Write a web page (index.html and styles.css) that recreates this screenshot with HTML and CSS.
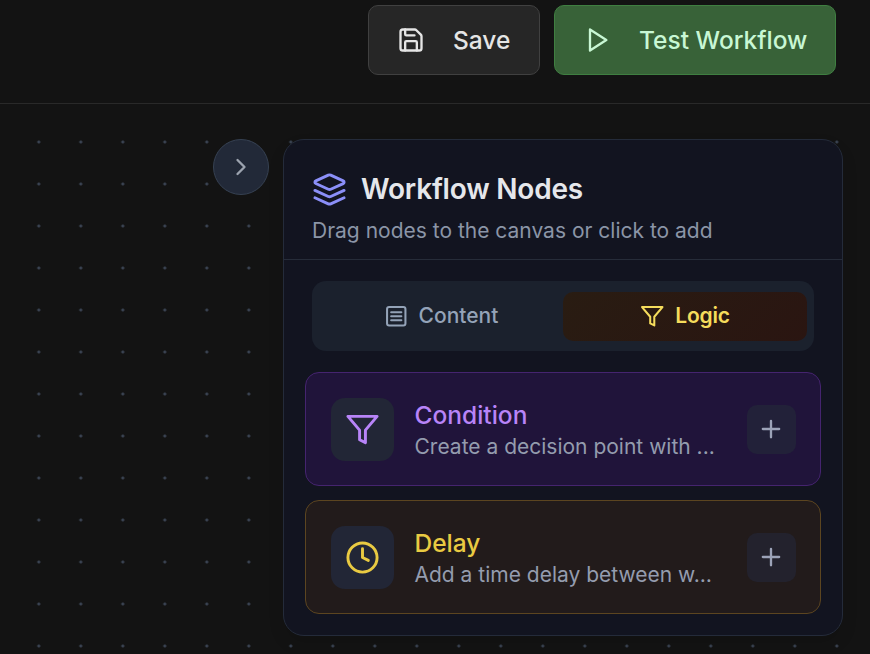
FILE: index.html
```html
<!DOCTYPE html>
<html lang="en">
<head>
    <meta charset="UTF-8">
    <meta name="viewport" content="width=device-width, initial-scale=1.0">
    <title>Workflow Builder</title>
    <link rel="stylesheet" href="styles.css">
</head>
<body>
    <header class="toolbar">
        <button class="btn btn-save">
            <svg class="icon" width="28" height="28" viewBox="0 0 24 24"><path d="M15.2 3a2 2 0 0 1 1.4.6l3.8 3.8a2 2 0 0 1 .6 1.4V19a2 2 0 0 1-2 2H5a2 2 0 0 1-2-2V5a2 2 0 0 1 2-2z"/><path d="M17 21v-7a1 1 0 0 0-1-1H8a1 1 0 0 0-1 1v7"/><path d="M7 3v4a1 1 0 0 0 1 1h7"/></svg>
            <span>Save</span>
        </button>
        <button class="btn btn-test">
            <svg class="icon" width="28" height="28" viewBox="0 0 24 24"><polygon points="6 3 20 12 6 21 6 3"/></svg>
            <span>Test Workflow</span>
        </button>
    </header>

    <main class="canvas">
        <button class="collapse-btn" aria-label="Collapse">
            <svg class="icon" width="28" height="28" viewBox="0 0 24 24"><path d="m9 18 6-6-6-6"/></svg>
        </button>

        <aside class="panel">
            <div class="panel-header">
                <div class="panel-title">
                    <svg class="icon" width="35" height="35" viewBox="0 0 24 24"><path d="m12.83 2.18a2 2 0 0 0-1.66 0L2.6 6.08a1 1 0 0 0 0 1.83l8.58 3.91a2 2 0 0 0 1.66 0l8.58-3.9a1 1 0 0 0 0-1.83Z"/><path d="m22 17.65-9.17 4.16a2 2 0 0 1-1.66 0L2 17.65"/><path d="m22 12.65-9.17 4.16a2 2 0 0 1-1.66 0L2 12.65"/></svg>
                    <h2>Workflow Nodes</h2>
                </div>
                <p>Drag nodes to the canvas or click to add</p>
            </div>

            <div class="tabs">
                <button class="tab">
                    <svg class="icon" width="24.5" height="24.5" viewBox="0 0 24 24"><rect x="3" y="3" width="18" height="18" rx="2"/><path d="M7 8h10M7 12h10M7 16h10"/></svg>
                    <span>Content</span>
                </button>
                <button class="tab active">
                    <svg class="icon" width="24.5" height="24.5" viewBox="0 0 24 24"><polygon points="22 3 2 3 10 12.46 10 19 14 21 14 12.46 22 3"/></svg>
                    <span>Logic</span>
                </button>
            </div>

            <div class="node-list">
                <div class="node node-condition">
                    <div class="node-icon">
                        <svg class="icon" width="35" height="35" viewBox="0 0 24 24"><polygon points="22 3 2 3 10 12.46 10 19 14 21 14 12.46 22 3"/></svg>
                    </div>
                    <div class="node-text">
                        <h3>Condition</h3>
                        <p>Create a decision point with ...</p>
                    </div>
                    <button class="add-btn" aria-label="Add">
                        <svg class="icon" width="28" height="28" viewBox="0 0 24 24"><path d="M5 12h14M12 5v14"/></svg>
                    </button>
                </div>
                <div class="node node-delay">
                    <div class="node-icon">
                        <svg class="icon" width="35" height="35" viewBox="0 0 24 24"><circle cx="12" cy="12" r="10"/><polyline points="12 6 12 12 16 14"/></svg>
                    </div>
                    <div class="node-text">
                        <h3>Delay</h3>
                        <p>Add a time delay between w…</p>
                    </div>
                    <button class="add-btn" aria-label="Add">
                        <svg class="icon" width="28" height="28" viewBox="0 0 24 24"><path d="M5 12h14M12 5v14"/></svg>
                    </button>
                </div>
            </div>
        </aside>
    </main>
</body>
</html>
```
FILE: styles.css
```css
* {
    box-sizing: border-box;
}
body {
    margin: 0;
    height: 654px;
    overflow: hidden;
    display: flex;
    flex-direction: column;
    background-color: #131313;
    font-family: Inter, sans-serif;
}
h2, h3, p {
    margin: 0;
}
button {
    font-family: inherit;
    border: none;
    padding: 0;
    cursor: pointer;
}
.icon {
    flex-shrink: 0;
    fill: none;
    stroke: currentColor;
    stroke-width: 2;
    stroke-linecap: round;
    stroke-linejoin: round;
}

/* Toolbar */
.toolbar {
    height: 104px;
    flex-shrink: 0;
    padding: 5px 34px 0 0;
    border-bottom: 1px solid #292929;
    display: flex;
    justify-content: flex-end;
    align-items: flex-start;
    gap: 14px;
}
.btn {
    height: 70px;
    display: flex;
    align-items: center;
    gap: 28px;
    padding: 0 0 0 28px;
    border: 1px solid;
    border-radius: 10px;
    font-size: 24.5px;
    font-weight: 500;
    white-space: nowrap;
}
.btn-save {
    width: 172px;
    background-color: #262626;
    border-color: #404040;
    color: #e5e5e5;
}
.btn-test {
    width: 282px;
    background-color: #386238;
    border-color: #3f7f41;
    color: #c8f7d4;
}

/* Canvas */
.canvas {
    flex: 1;
    display: flex;
    align-items: flex-start;
    justify-content: flex-end;
    gap: 14px;
    padding: 35px 27px 0 0;
    background-image: radial-gradient(circle at center, #3a4352 1px, transparent 2px);
    background-size: 42px 42px;
    background-position: 17.8px 17px;
}
.collapse-btn {
    width: 56px;
    height: 56px;
    display: flex;
    align-items: center;
    justify-content: center;
    border: 1px solid #364152;
    border-radius: 50%;
    background-color: #222938;
    color: #9ca3af;
}

/* Panel */
.panel {
    width: 560px;
    height: 497px;
    border: 1px solid #242b3a;
    border-radius: 21px;
    background-color: #121420;
    box-shadow: 0 8px 16px rgba(0, 0, 0, 0.1);
}
.panel-header {
    height: 120px;
    padding: 28px 28px 0;
    border-bottom: 1px solid #262c39;
}
.panel-title {
    display: flex;
    align-items: center;
    gap: 14px;
    height: 42px;
    color: #8b8ff8;
}
.panel-title h2 {
    font-size: 28px;
    font-weight: 600;
    letter-spacing: -0.2px;
    color: #e5e7eb;
}
.panel-header p {
    margin-top: 7px;
    font-size: 21px;
    line-height: 28px;
    color: #8b95a7;
}

/* Tabs */
.tabs {
    display: flex;
    height: 70px;
    margin: 21px 28px 0;
    padding: 11px 7px 10px;
    border-radius: 14px;
    background-color: #1b212d;
}
.tab {
    flex: 1;
    display: flex;
    align-items: center;
    justify-content: center;
    gap: 10.5px;
    padding-bottom: 1px;
    border-radius: 10px;
    background: none;
    color: #94a3b8;
    font-size: 21px;
    font-weight: 500;
}
.tab.active {
    background: linear-gradient(135deg, #291c12, #2a1511);
    color: #f5dc5c;
    font-weight: 600;
    letter-spacing: -0.2px;
}
.tab span {
    margin-top: -1px;
}

/* Nodes */
.node-list {
    display: flex;
    flex-direction: column;
    gap: 14px;
    padding: 21px;
}
.node {
    height: 114px;
    display: flex;
    align-items: center;
    gap: 20.5px;
    padding: 0 24px 0 25px;
    border: 1px solid;
    border-radius: 14px;
}
.node-condition {
    background-color: #20143a;
    border-color: #45246f;
    color: #b884f8;
}
.node-delay {
    background-color: #221b1b;
    border-color: #5c4520;
    color: #e9ca42;
}
.node-icon {
    width: 63px;
    height: 63px;
    flex-shrink: 0;
    display: flex;
    align-items: center;
    justify-content: center;
    border-radius: 14px;
    background-color: #222636;
}
.node-text {
    flex: 1;
    min-width: 0;
}
.node-text h3 {
    font-size: 24.5px;
    line-height: 35px;
    font-weight: 500;
}
.node-text p {
    font-size: 21px;
    line-height: 28px;
    color: #949cae;
    white-space: nowrap;
}
.add-btn {
    width: 49px;
    height: 49px;
    flex-shrink: 0;
    display: flex;
    align-items: center;
    justify-content: center;
    padding-right: 1px;
    border-radius: 10px;
    background-color: #222139;
    color: #9ca3b8;
}
.node-delay .add-btn {
    background-color: #23222d;
}
```
